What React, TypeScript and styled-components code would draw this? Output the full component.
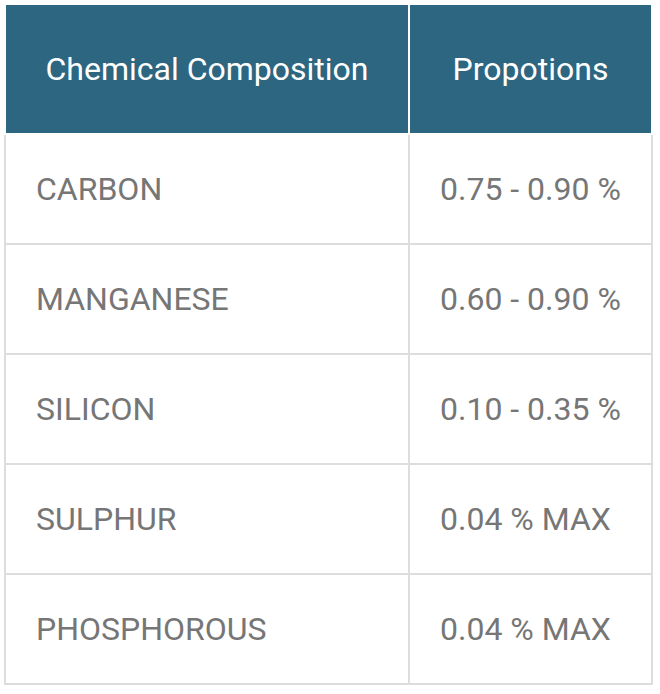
import React from "react";
import styled, { createGlobalStyle } from "styled-components";

const Global = createGlobalStyle`
  html, body { margin: 0; padding: 0; background: #ffffff; }
  body { font-family: Roboto, "Liberation Sans", Arial, sans-serif; }
`;

const Table = styled.div`
  display: flex;
  flex-direction: column;
  width: 649px;
  margin: 3px 0 0 4px;
`;

const Row = styled.div<{ $head?: boolean }>`
  display: grid;
  grid-template-columns: 402px 241px;
  column-gap: 2px;
  padding: ${(p) => (p.$head ? "2px" : "0 2px 2px 2px")};
  background: ${(p) => (p.$head ? "#ffffff" : "#dddddd")};
`;

const HeadCell = styled.div`
  height: 128px;
  background: #2c6680;
  color: #ffffff;
  font-size: 32px;
  display: flex;
  align-items: center;
  justify-content: center;
`;

const Cell = styled.div`
  height: 108px;
  background: #ffffff;
  color: #767676;
  font-size: 32px;
  display: flex;
  align-items: center;
  padding-left: 30px;
`;

const data: [string, string][] = [
  ["CARBON", "0.75 - 0.90 %"],
  ["MANGANESE", "0.60 - 0.90 %"],
  ["SILICON", "0.10 - 0.35 %"],
  ["SULPHUR", "0.04 % MAX"],
  ["PHOSPHOROUS", "0.04 % MAX"],
];

export default function App() {
  return (
    <>
      <Global />
      <Table>
        <Row $head>
          <HeadCell>Chemical Composition</HeadCell>
          <HeadCell>Propotions</HeadCell>
        </Row>
        {data.map(([a, b]) => (
          <Row key={a}>
            <Cell>{a}</Cell>
            <Cell>{b}</Cell>
          </Row>
        ))}
      </Table>
    </>
  );
}
